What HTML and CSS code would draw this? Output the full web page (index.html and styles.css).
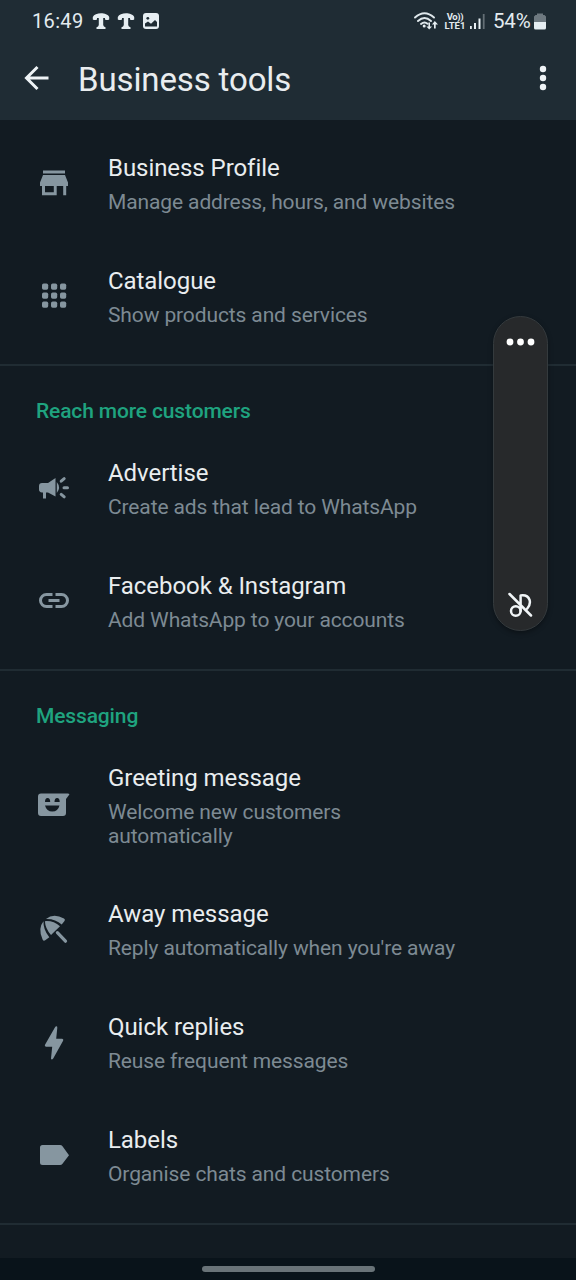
FILE: index.html
```html
<!DOCTYPE html>
<html lang="en">
<head>
<meta charset="utf-8">
<title>Business tools</title>
<link rel="stylesheet" href="styles.css">
</head>
<body>
<div class="screen">
  <header class="header">
    <div class="status">
      <span class="clock">16:49</span>
      <svg class="call" width="18" height="18" viewBox="0 0 18 18"><path d="M.8 7.500V5C3 0 15 0 17.200 5v2.500q-2.200 1-4.200 0V6h-1.800v7q.3 1.800 2.300 2.200V17h-9v-1.800Q6.500 14.800 6.800 13V6H5v1.500q-2 1-4.200 0z"/></svg>
      <svg class="call" width="18" height="18" viewBox="0 0 18 18"><path d="M.8 7.500V5C3 0 15 0 17.200 5v2.500q-2.200 1-4.200 0V6h-1.800v7q.3 1.800 2.300 2.200V17h-9v-1.800Q6.500 14.800 6.800 13V6H5v1.500q-2 1-4.200 0z"/></svg>
      <svg class="photo" width="16" height="16" viewBox="0 0 16 16"><rect width="16" height="16" rx="3"/><circle class="cut" cx="4.800" cy="5.300" r="1.400"/><path class="cut" d="M2 13.500v-3l3-2 3 2.300 4-3.800 2 2v4.500z"/></svg>
      <span class="spacer"></span>
      <svg class="wifi" width="24" height="18" viewBox="0 0 24 18"><g fill="none" stroke="#dfe8ec" stroke-width="1.900" stroke-linecap="round"><path d="M1 5.500Q10.500-3 20 5.500M4 9q6.500-5.800 13 0M7 12q3.500-3 6.500-.3"/></g><circle cx="10.200" cy="14" r="1.500"/><path d="M14.400 10.500h1.600v4h2l-2.800 3-2.800-3h2zM20 16.500h1.700v-4H24L20.800 9 18 12.500h2z"/></svg>
      <span class="volte"><span class="vo">Vo))</span><span>LTE1</span></span>
      <svg class="signal" width="15" height="17" viewBox="0 0 15 17"><path d="M0 13h1.800v3H0zM4 10h2v6H4zM8.500 5.500h2V16h-2z"/><path opacity=".35" d="M12.800 1h1.800v15h-1.800z"/></svg>
      <span class="percent">54%</span>
      <svg class="battery" width="12" height="17" viewBox="0 0 12 17"><path opacity=".4" d="M3 2V.5h6V2h1.500L12 3.500V9H0V3.500L1.500 2z"/><path d="M0 9h12v6q0 1.500-1.500 1.500h-9Q0 16.500 0 15z"/></svg>
    </div>
    <div class="toolbar">
      <svg class="back" width="36" height="36" viewBox="0 0 36 36"><path d="M30.500 18H9M19.500 7 8.500 18l11 11"/></svg>
      <h1 class="title">Business tools</h1>
      <svg class="more" width="8" height="26" viewBox="0 0 8 26"><circle cx="4" cy="4" r="3.200"/><circle cx="4" cy="13" r="3.200"/><circle cx="4" cy="22" r="3.200"/></svg>
    </div>
  </header>

  <main class="content">
    <section class="group first">
      <div class="row">
        <svg class="icon" viewBox="0 0 36 36"><path d="M7 5.500h22v3H7zM7 10h22l3 7.500v3.500h-1.800v9.300h-3V21h-6.500v9.300H6V21H4v-3.500zM9 21v6.300h8.800V21z"/></svg>
        <div class="text"><div class="name">Business Profile</div><div class="desc">Manage address, hours, and websites</div></div>
      </div>
      <div class="row">
        <svg class="icon" viewBox="0 0 36 36"><rect x="6" y="5.500" width="6.200" height="6.200" rx="1.700"/><rect x="15" y="5.500" width="6.200" height="6.200" rx="1.700"/><rect x="24" y="5.500" width="6.200" height="6.200" rx="1.700"/><rect x="6" y="14.500" width="6.200" height="6.200" rx="1.700"/><rect x="15" y="14.500" width="6.200" height="6.200" rx="1.700"/><rect x="24" y="14.500" width="6.200" height="6.200" rx="1.700"/><rect x="6" y="23.500" width="6.200" height="6.200" rx="1.700"/><rect x="15" y="23.500" width="6.200" height="6.200" rx="1.700"/><rect x="24" y="23.500" width="6.200" height="6.200" rx="1.700"/></svg>
        <div class="text"><div class="name">Catalogue</div><div class="desc">Show products and services</div></div>
      </div>
    </section>

    <section class="group">
      <h2 class="heading">Reach more customers</h2>
      <div class="row">
        <svg class="icon" viewBox="0 0 36 36"><path d="M6 13h6l7.500-5v18.500L12 22.500h-2v6H7v-6H6q-3-.3-3-3v-3.500q0-3 3-3zM20.800 12q4.500 5.500 0 11z"/><path d="m25.200 11.200 3-2.500M28 17.700h3.500M25.200 24.400l3 2.500" fill="none" stroke="#8696a0" stroke-width="3" stroke-linecap="round"/></svg>
        <div class="text"><div class="name">Advertise</div><div class="desc">Create ads that lead to WhatsApp</div></div>
      </div>
      <div class="row">
        <svg class="icon" viewBox="0 0 36 36"><path d="M16.500 11.500H10.500a6 6 0 0 0 0 12h6M19.500 11.500h6a6 6 0 0 1 0 12h-6M12.500 17.500h11" fill="none" stroke="#8696a0" stroke-width="3"/></svg>
        <div class="text"><div class="name">Facebook &amp; Instagram</div><div class="desc">Add WhatsApp to your accounts</div></div>
      </div>
    </section>

    <section class="group">
      <h2 class="heading">Messaging</h2>
      <div class="row">
        <svg class="icon" viewBox="0 0 36 36"><path d="M5 6.500h27q2 0 1 1.600L30 12v14q0 3-3 3H5q-3 0-3-3V9.500q0-3 3-3z"/><g class="hole"><path d="M9 15q0-4 2.600-4t2.600 4zM18.500 15q0-4 2.600-4t2.600 4zM9 18.500h14.500q-1.500 6-7.200 6T9 18.500z"/></g></svg>
        <div class="text"><div class="name">Greeting message</div><div class="desc narrow">Welcome new customers automatically</div></div>
      </div>
      <div class="row">
        <svg class="icon" viewBox="0 0 36 36"><path d="M8.900 9.200Q17.500 8.500 24 14.300L15 23Q9.300 16.500 8.900 9.200zM7.500 9.300Q7 17.500 13.300 25.300l-4.100 3q-1.700 1.100-2.600-.8Q1.500 16.500 7.500 9.300zM10 7Q17.500.8 28 6.500q1.700 1 .5 2.600l-2.800 3.500Q19.500 6.700 10 7z"/><path d="m21.400 20.600 8.100 8.600" fill="none" stroke="#8696a0" stroke-width="3.200" stroke-linecap="round"/></svg>
        <div class="text"><div class="name">Away message</div><div class="desc">Reply automatically when you're away</div></div>
      </div>
      <div class="row">
        <svg class="icon" viewBox="0 0 36 36"><path d="M19.300 1.700q2-1.200 2 1L20.200 13.700h6q1.700.3.900 2L17.200 33.600q-1.700 1.900-2.200-.2L16.200 21.700H10q-1.800-.3-1-2z"/></svg>
        <div class="text"><div class="name">Quick replies</div><div class="desc">Reuse frequent messages</div></div>
      </div>
      <div class="row">
        <svg class="icon" viewBox="0 0 36 36"><path d="M6.500 8H24q1.600 0 2.500 1.200l6.500 9-6.500 8.600Q25.600 28 24 28H6.500Q4 28 4 25.500v-15Q4 8 6.500 8z"/></svg>
        <div class="text"><div class="name">Labels</div><div class="desc">Organise chats and customers</div></div>
      </div>
    </section>
  </main>

  <footer class="navbar"><span class="handle"></span></footer>

  <aside class="volume">
    <svg width="30" height="8" viewBox="0 0 30 8"><circle cx="4" cy="4" r="3.400"/><circle cx="14.500" cy="4" r="3.400"/><circle cx="25" cy="4" r="3.400"/></svg>
    <svg width="28" height="28" viewBox="0 0 28 28"><g fill="none" stroke="#f1f5f7" stroke-width="2.500" stroke-linecap="round" stroke-linejoin="round"><circle cx="8.800" cy="20" r="4.800"/><path d="M13.600 20V4.500q7-1 9 4.500 1.200 4.500-2.300 8.500M2.500 3l21.500 21.500"/></g></svg>
  </aside>
</div>
</body>
</html>
```
FILE: styles.css
```css
* { box-sizing: border-box; }
body { margin: 0; background: #121b22; font-family: Roboto, sans-serif; }
svg { display: block; flex: none; }
.screen { position: relative; display: flex; flex-direction: column; width: 576px; height: 1280px; overflow: hidden; background: #121b22; }
.header { flex: none; height: 120px; background: #1f2c34; }
.status { display: flex; align-items: center; height: 42px; padding: 0 30px 0 32px; color: #e3ebef; fill: #e6eef2; }
.clock { width: 52px; font-size: 20px; letter-spacing: .35px; }
.call { margin-left: 8px; }
.call + .call { margin-left: 7px; }
.photo { margin-left: 8px; }
.cut { fill: #1f2c34; }
.spacer { flex: 1; }
.volte { display: flex; flex-direction: column; align-items: center; width: 22px; margin-left: 6px; font-size: 9.500px; line-height: 9px; font-weight: 700; white-space: nowrap; }
.vo { letter-spacing: -.4px; }
.signal { margin-left: 4px; }
.percent { width: 39px; margin-left: 8px; font-size: 20.500px; letter-spacing: -.2px; white-space: nowrap; }
.battery { margin-left: 2px; }
.toolbar { display: flex; align-items: center; height: 72px; padding: 0 29px 0 18px; }
.back { fill: none; stroke: #eef3f6; stroke-width: 3; }
.title { flex: 1; margin: 3px 0 0 24px; color: #e9edef; font-size: 33px; font-weight: 400; line-height: 40px; letter-spacing: -.13px; }
.more { fill: #eef3f6; }
.content { flex: 1; min-height: 0; }
.group { padding-bottom: 12px; border-bottom: 2px solid #202c33; }
.first { padding-top: 6px; }
.heading { height: 65px; margin: 0; padding: 33px 36px 0; color: #1fa37f; font-size: 21px; line-height: 24px; font-weight: 500; letter-spacing: -.14px; }
.row { display: flex; align-items: center; padding: 0 36px; }
.icon { width: 36px; height: 36px; margin-top: 1.500px; fill: #8696a0; }
.hole { fill: #121b22; }
.text { padding: 28px 0 24.900px 36px; }
.name { color: #e9edef; font-size: 24px; line-height: 28px; letter-spacing: -.06px; }
.desc { margin-top: 8px; color: #7d8a93; font-size: 21px; line-height: 24px; letter-spacing: -.12px; white-space: nowrap; }
.narrow { width: 300px; white-space: normal; }
.navbar { display: flex; justify-content: center; height: 22px; padding-top: 8px; background: #09131a; }
.handle { width: 173px; height: 6px; border-radius: 3px; background: #697378; }
.volume { position: absolute; top: 316px; left: 493px; display: flex; flex-direction: column; align-items: center; justify-content: space-between; width: 55px; height: 315px; padding: 21px 0 11px; border: 1px solid #343a3d; border-radius: 28px; background: #27292b; fill: #fff; box-shadow: 0 2px 5px rgba(0, 0, 0, .35); }
```
